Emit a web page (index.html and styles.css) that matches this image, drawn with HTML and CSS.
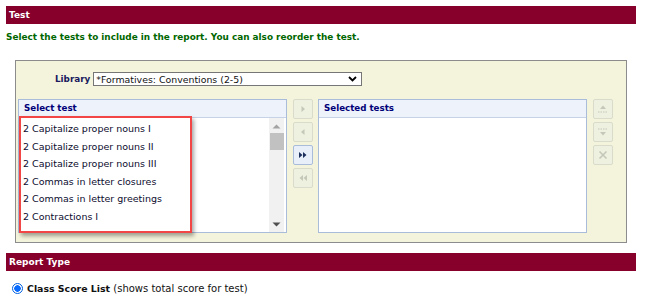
FILE: index.html
```html
<!DOCTYPE html>
<html>
  <head>
    <meta charset="utf-8">
    <title>Report - Test</title>
    <link rel="stylesheet" href="styles.css">
  </head>
  <body>
    <div class="bar">Test</div>
    <div class="intro">Select the tests to include in the report. You can also reorder the test.</div>

    <div class="panel">
      <div class="libraryrow">
        <label class="libname">Library</label>
        <div class="libselect">
          <span>*Formatives: Conventions (2-5)</span>
          <svg class="caret" width="9" height="6" viewBox="0 0 9 6"><path d="M1 1 L4.5 4.5 L8 1" fill="none" stroke="#000" stroke-width="1.8"/></svg>
        </div>
      </div>

      <div class="lists">
        <div class="listbox">
          <div class="listhead">Select test</div>
          <div class="listbody">
            <ul class="items">
              <li>2 Capitalize proper nouns I</li>
              <li>2 Capitalize proper nouns II</li>
              <li>2 Capitalize proper nouns III</li>
              <li>2 Commas in letter closures</li>
              <li>2 Commas in letter greetings</li>
              <li>2 Contractions I</li>
              <li>2 Contractions II</li>
            </ul>
            <div class="scroll">
              <svg width="9" height="5" viewBox="0 0 9 5"><path d="M0.5 4.5 L4.5 0.5 L8.5 4.5 Z" fill="#a3a3a3"/></svg>
              <div class="thumb"></div>
              <div class="spacer"></div>
              <svg width="9" height="5" viewBox="0 0 9 5"><path d="M0.5 0.5 L4.5 4.5 L8.5 0.5 Z" fill="#505050"/></svg>
            </div>
          </div>
          <div class="mark"></div>
        </div>

        <div class="btns">
          <div class="btn off"><svg width="8" height="8" viewBox="0 0 8 8"><path d="M2.5 1 L6 4 L2.5 7 Z" fill="#c4c8b8"/></svg></div>
          <div class="btn off"><svg width="8" height="8" viewBox="0 0 8 8"><path d="M5.5 1 L2 4 L5.5 7 Z" fill="#c4c8b8"/></svg></div>
          <div class="btn on"><svg width="10" height="8" viewBox="0 0 10 8"><path d="M1 1 L4.5 4 L1 7 Z M5 1 L8.5 4 L5 7 Z" fill="#1d2f5c"/></svg></div>
          <div class="btn off"><svg width="10" height="8" viewBox="0 0 10 8"><path d="M5 1 L1.5 4 L5 7 Z M9 1 L5.5 4 L9 7 Z" fill="#c4c8b8"/></svg></div>
        </div>

        <div class="listbox">
          <div class="listhead">Selected tests</div>
          <div class="listbody"></div>
        </div>

        <div class="btns">
          <div class="btn off"><svg width="12" height="10" viewBox="0 0 12 10"><path d="M3 5 L6 1.5 L9 5 Z" fill="#c4c8b8"/><path d="M1 8 H11" stroke="#c4c8b8" stroke-dasharray="1.5 1"/></svg></div>
          <div class="btn off"><svg width="12" height="10" viewBox="0 0 12 10"><path d="M1 2 H11" stroke="#c4c8b8" stroke-dasharray="1.5 1"/><path d="M3 5 L9 5 L6 8.5 Z" fill="#c4c8b8"/></svg></div>
          <div class="btn off"><svg width="10" height="10" viewBox="0 0 10 10"><path d="M1.5 1.5 L8.5 8.5 M8.5 1.5 L1.5 8.5" stroke="#c4c8b8" stroke-width="1.6"/></svg></div>
        </div>
      </div>
    </div>

    <div class="bar second">Report Type</div>
    <div class="choice">
      <span class="radio"></span>
      <b>Class Score List</b>&nbsp;(shows total score for test)
    </div>
  </body>
</html>
```

FILE: styles.css
```css
body{margin:0; padding:6px 11px 0 6px; font-family:"DejaVu Sans", Verdana, sans-serif; font-size:9.5px; color:#000; background:#fff;}

.bar{height:18px; line-height:18px; padding-left:3px; background:#86002b; color:#fff; font-weight:bold; font-size:9px;}

.second{margin-top:10px;}

.intro{margin-top:8px; color:#006600; font-weight:bold; font-size:8.9px;}

.panel{margin:18px 9px 0 9px; height:181px; border:1px solid #8c8c8c; background:#f4f4dc; padding:0 2px;}

.libraryrow{display:flex; align-items:center; margin-top:11px; padding-left:37px;}
.libname{font-weight:bold; color:#1a1a5e; margin-right:3px; font-size:8.8px;}
.libselect{height:12px; border:1px solid #767676; background:#fff; display:flex; align-items:center; justify-content:space-between; padding:0 4px 0 2px; width:261px; font-size:9.4px;}
.libselect span{color:#111;}

.lists{display:flex; margin-top:13px; gap:5px;}

.listbox{position:relative; width:267px; height:132px; border:1px solid #a9bcd9; background:#fff; display:flex; flex-direction:column;}
.listhead{height:17px; line-height:17px; border-bottom:1px solid #c6d2e6; background:#eef2fb; color:#000078; font-weight:bold; font-size:8.7px; padding-left:5px;}
.listbody{flex:1; display:flex; overflow:hidden;}

.items{list-style:none; margin:0; padding:2px 0 0 4px; flex:1; color:#0c0c2e;}
.items li{height:17.6px; line-height:17.6px; white-space:nowrap;}

.scroll{width:15px; margin-right:2px; background:#f1f1f1; display:flex; flex-direction:column; align-items:center; padding-top:6px; padding-bottom:5px;}
.thumb{width:14px; height:17px; background:#c1c1c1; margin-top:4px;}
.spacer{flex:1;}

.mark{position:absolute; left:0; top:16px; width:169px; height:113px; border:2px solid #f24646; box-shadow:2px 3px 4px rgba(0,0,0,0.35);}

.btns{display:flex; flex-direction:column; gap:3px; margin-left:1px;}
.btn{width:18px; height:18px; border:1px solid #d9dccb; border-radius:2px; background:#eef0e0; display:flex; align-items:center; justify-content:center;}
.btn.on{background:#e9eff9; border-color:#a9bcd9;}

.choice{margin-top:12px; padding-left:6px; display:flex; align-items:center; font-size:10px; color:#111;}
.choice b{margin-left:4px; font-size:9.4px;}
.radio{width:9px; height:9px; border-radius:50%; border:1px solid #0060df; background:radial-gradient(circle, #0a6bff 0 3px, #fff 3.5px);}
```
